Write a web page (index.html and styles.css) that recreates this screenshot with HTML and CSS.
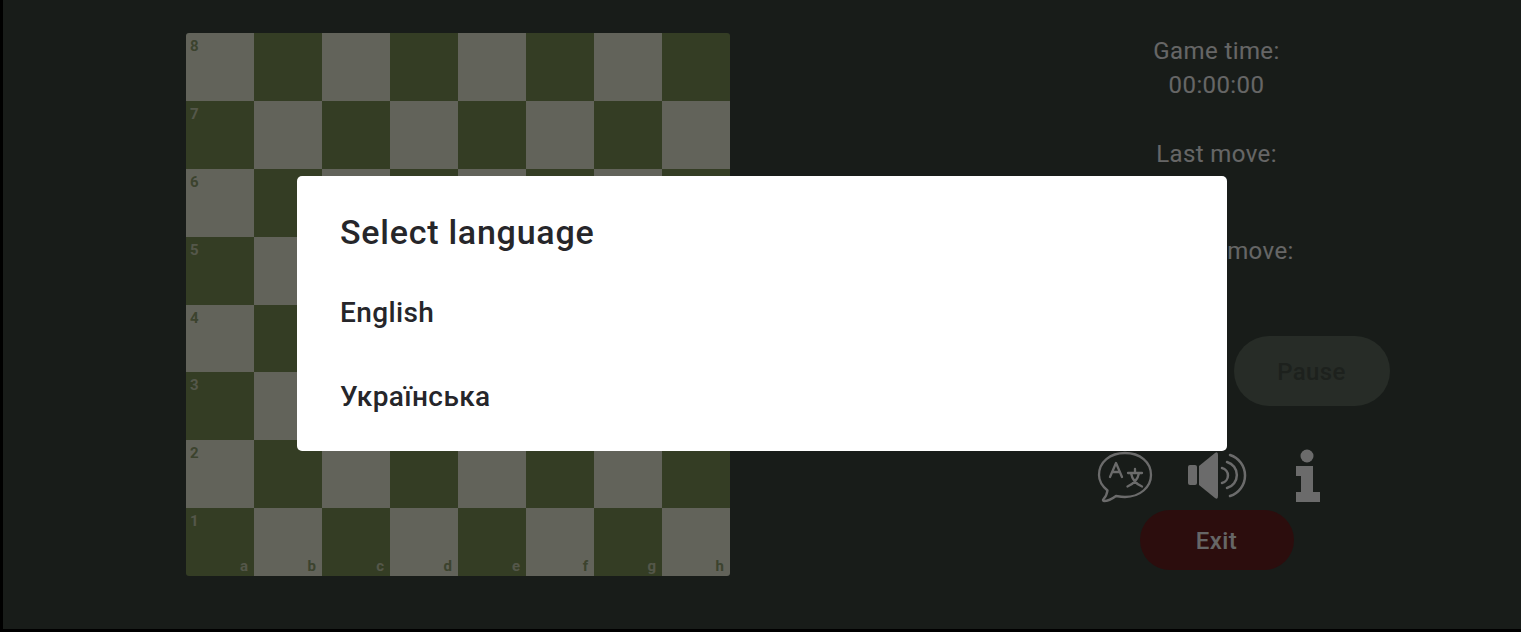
FILE: index.html
```html
<!DOCTYPE html>
<html lang="en">
<head>
    <meta charset="UTF-8">
    <meta name="viewport" content="width=device-width, initial-scale=1.0">
    <title>Chess</title>
    <link rel="stylesheet" href="styles.css">
</head>
<body>
    <div class="screen">
        <div class="board" id="board"></div>

        <div class="side">
            <p class="info-line">Game time:</p>
            <p class="info-line">00:00:00</p>
            <p class="info-line last-move">Last move:</p>
            <p class="info-line move-value"></p>
            <p class="info-line">Current move:</p>

            <div class="buttons">
                <button class="btn btn-start">New game</button>
                <button class="btn btn-pause">Pause</button>
            </div>

            <div class="icons">
                <svg class="icon" viewBox="0 0 60 52">
                    <path class="line" d="M30 3C45 3 56 12 56 25C56 37 45 47 30 47C27 47 24 46.5 21 46C17 49 13 51 9 51C8 51 7.5 50 8.5 49C10.5 47 12 44 12.5 40.5C7 36 4 31 4 25C4 12 15 3 30 3Z"/>
                    <path class="line" d="M15 27L21 13L27 27M17.5 22H24.5"/>
                    <path class="line" d="M40 19V23M33 23H47M36 23C37 29 41 34 47 36.5M44 23C43 29 38 34 32.5 36.5"/>
                </svg>
                <svg class="icon" viewBox="0 0 60 52">
                    <rect class="fill" x="1" y="15" width="9" height="20" rx="2"/>
                    <path class="fill" d="M12 16L28 3Q31 1 31 5V46Q31 50 28 48L12 35Z"/>
                    <path class="line thick" d="M35 18A7.7 7.7 0 0 1 35 33M40 12A13.5 13.5 0 0 1 40 38M43 5A21.5 21.5 0 0 1 43 46"/>
                </svg>
                <svg class="icon" viewBox="0 0 60 52">
                    <circle class="fill" cx="29" cy="6" r="6.5"/>
                    <path class="fill" d="M18 16H35V42H42V52H18V42H23V26H18Z"/>
                </svg>
            </div>

            <button class="btn btn-exit">Exit</button>
        </div>
    </div>

    <div class="scrim">
        <div class="dialog">
            <h2>Select language</h2>
            <div class="lang">English</div>
            <div class="lang">Українська</div>
        </div>
    </div>

    <script>
        // Build the 64 squares with their rank and file labels
        const board = document.getElementById('board');
        const files = 'abcdefgh';
        for (let row = 0; row < 8; row++) {
            for (let col = 0; col < 8; col++) {
                const square = document.createElement('div');
                square.className = 'square ' + ((row + col) % 2 === 0 ? 'light' : 'dark');
                if (col === 0) {
                    const rank = document.createElement('span');
                    rank.className = 'rank';
                    rank.innerText = 8 - row;
                    square.appendChild(rank);
                }
                if (row === 7) {
                    const file = document.createElement('span');
                    file.className = 'file';
                    file.innerText = files[col];
                    square.appendChild(file);
                }
                board.appendChild(square);
            }
        }
    </script>
</body>
</html>
```

FILE: styles.css
```css
body {
    font-family: Roboto, "Noto Sans", sans-serif;
    background-color: #000;
    margin: 0;
    height: 632px;
    overflow: hidden;
}

.screen {
    display: flex;
    margin-left: 3px;
    height: 629px;
    background-color: #39433c;
}

.board {
    display: grid;
    grid-template-columns: repeat(8, 68px);
    grid-template-rows: repeat(8, 67.875px);
    margin: 33px 0 0 182.5px;
    height: 543px;
    border-radius: 3px;
    overflow: hidden;
}

.square {
    display: flex;
    flex-direction: column;
    justify-content: space-between;
    padding: 5px 5.5px 2px 4.5px;
    box-sizing: border-box;
    font-size: 15px;
    font-weight: 700;
    line-height: 16px;
}

.light {
    background-color: #e9ecd6;
    color: #8f9f6e;
}

.dark {
    background-color: #7c9156;
    color: #c8cfb0;
}

.file {
    margin-top: auto;
    align-self: flex-end;
}

.side {
    display: flex;
    flex-direction: column;
    align-items: center;
    width: 400px;
    margin-left: 287px;
    padding-top: 34px;
}

.info-line {
    margin: 0;
    height: 34px;
    font-size: 24px;
    line-height: 34px;
    letter-spacing: 0.4px;
    color: #f3f3f3;
}

.last-move {
    margin-top: 35px;
}

.move-value {
    margin-bottom: 29px;
}

.buttons {
    display: flex;
    gap: 12px;
    margin-top: 68px;
}

.btn {
    border: none;
    padding: 2px 0 0;
    font-family: inherit;
    font-size: 24px;
    font-weight: 500;
    letter-spacing: 0.4px;
    border-radius: 36px;
}

.btn-start {
    width: 178px;
    height: 70px;
    background-color: #5d695d;
    color: #454f47;
}

.btn-pause {
    width: 156px;
    height: 70px;
    background-color: #5d695d;
    color: #454f47;
}

.icons {
    display: flex;
    gap: 31.5px;
    margin-top: 44px;
}

.icon {
    width: 60px;
    height: 52px;
    overflow: visible;
}

.line {
    fill: none;
    stroke: #fff;
    stroke-width: 2.3;
    stroke-linecap: round;
    stroke-linejoin: round;
}

.thick {
    stroke-width: 2.5;
}

.fill {
    fill: #fff;
}

.btn-exit {
    width: 154px;
    height: 60px;
    margin-top: 8px;
    background-color: #691f1f;
    color: #f3f3f3;
}

.scrim {
    position: fixed;
    top: 0;
    left: 3px;
    right: 0;
    height: 629px;
    display: flex;
    align-items: center;
    justify-content: center;
    background-color: rgba(0, 0, 0, 0.58);
}

.dialog {
    width: 930px;
    height: 275px;
    margin-top: -2px;
    padding: 33px 43px 0;
    box-sizing: border-box;
    background: white;
    border-radius: 5px;
    color: #26262a;
}

.dialog h2 {
    margin: 0 0 15px;
    font-size: 34px;
    font-weight: 500;
    line-height: 46px;
    letter-spacing: 0.75px;
}

.lang {
    height: 84px;
    font-size: 28px;
    font-weight: 500;
    line-height: 85px;
    letter-spacing: 0.4px;
}
```
